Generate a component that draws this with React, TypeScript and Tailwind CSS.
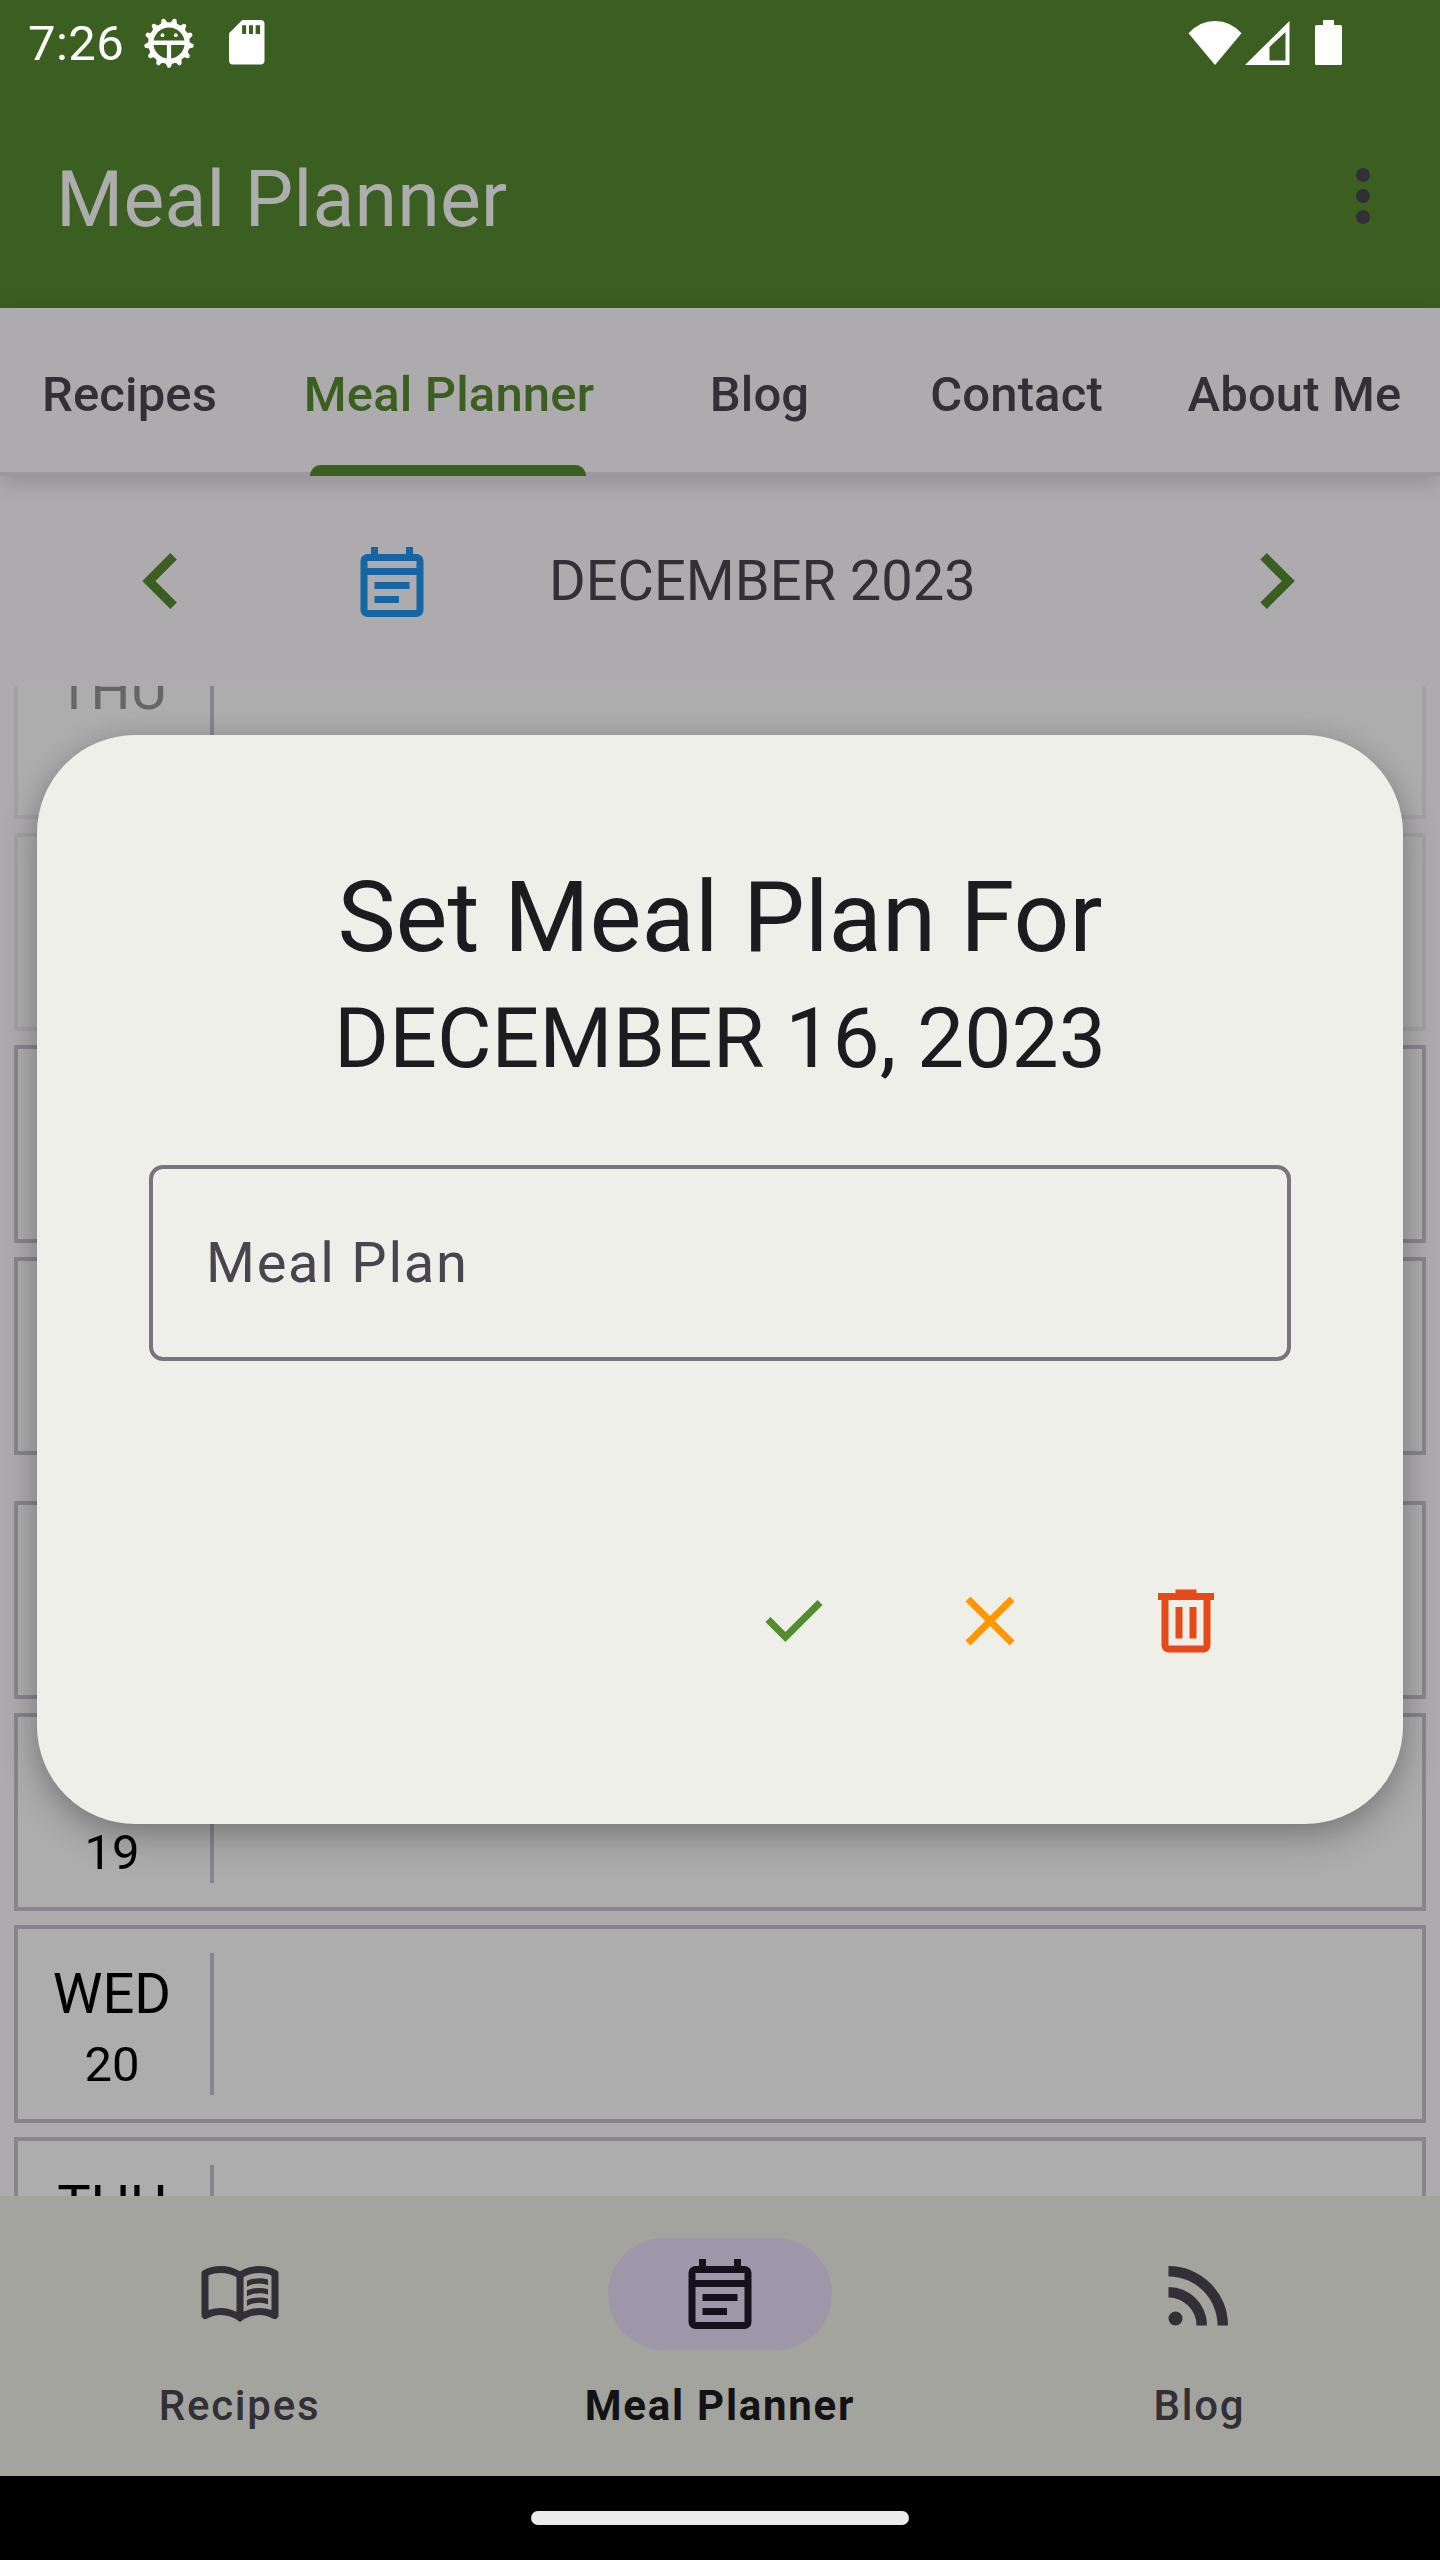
import React from "react";

type IconProps = { d: string; className: string };

function Symbol({ d, className }: IconProps) {
  return (
    <svg viewBox="0 -960 960 960" fill="currentColor" className={className}>
      <path d={d} />
    </svg>
  );
}

const ICONS = {
  left: "M560-240 320-480l240-240 56 56-184 184 184 184-56 56Z",
  right: "M504-480 320-664l56-56 240 240-240 240-56-56 184-184Z",
  event:
    "M280-240v-80h280v80H280Zm0-160v-80h400v80H280ZM200-80q-33 0-56.5-23.5T120-160v-560q0-33 23.5-56.5T200-800h40v-80h80v80h320v-80h80v80h40q33 0 56.5 23.5T840-720v560q0 33-23.5 56.5T760-80H200Zm0-80h560v-400H200v400Zm0-480h560v-80H200v80Z",
  check: "M382-240 154-468l57-57 171 171 367-367 57 57-424 424Z",
  close:
    "m256-200-56-56 224-224-224-224 56-56 224 224 224-224 56 56-224 224 224 224-56 56-224-224-224 224Z",
  trash:
    "M280-120q-33 0-56.5-23.5T200-200v-520h-40v-80h200v-40h240v40h200v80h-40v520q0 33-23.5 56.5T680-120H280Zm400-600H280v520h400v-520ZM360-280h80v-360h-80v360Zm160 0h80v-360h-80v360Z",
  book: "M560-564v-68q33-14 67.5-21t72.5-7q26 0 51 4t49 10v64q-24-9-48.5-13.5T700-600q-38 0-73 9.5T560-564Zm0 220v-68q33-14 67.5-21t72.5-7q26 0 51 4t49 10v64q-24-9-48.5-13.5T700-380q-38 0-73 9t-67 27Zm0-110v-68q33-14 67.5-21t72.5-7q26 0 51 4t49 10v64q-24-9-48.5-13.5T700-490q-38 0-73 9.5T560-454ZM260-320q47 0 91.5 10.5T440-278v-394q-41-24-87-36t-93-12q-36 0-71.5 7T120-692v396q35-12 69.5-18t70.5-6Zm260 42q44-21 88.5-31.5T700-320q36 0 70.5 6t69.5 18v-396q-33-14-68.5-21t-71.5-7q-47 0-93 12t-87 36v394Zm-40 118q-48-38-104-59t-116-21q-42 0-82.5 11T100-198q-21 11-40.5-1T40-234v-482q0-11 5.5-21T62-752q46-24 96-36t102-12q58 0 113.5 15T480-740q51-30 106.5-45T700-800q52 0 102 12t96 36q11 5 16.5 15t5.5 21v482q0 23-19.5 35t-40.5 1q-37-20-77.5-31T700-240q-60 0-116 21t-104 59Z",
  rss: "M200-120q-33 0-56.5-23.5T120-200q0-33 23.5-56.5T200-280q33 0 56.5 23.5T280-200q0 33-23.5 56.5T200-120Zm480 0q0-117-44-218.5T516-516q-76-76-177.5-120T120-680v-120q142 0 265 53t216 146q93 93 146 216t53 265H680Zm-240 0q0-67-25-124.5T346-346q-44-44-101.5-69T120-440v-120q92 0 171.5 34.5T431-431q60 60 94.5 139.5T560-120H440Z",
};

function BugIcon() {
  const teeth = Array.from({ length: 13 }, (_, i) => (i * 360) / 13);
  return (
    <svg viewBox="-26 -26 52 52" className="h-[52px] w-[52px]" fill="#fff">
      <circle r="18.2" fill="none" stroke="#fff" strokeWidth="5.2" />
      {teeth.map((a) => (
        <path key={a} transform={`rotate(${a})`} d="M-5.6 18.5Q-2.6 20-2.3 22.6A2.3 2.3 0 0 0 2.3 22.6Q2.6 20 5.6 18.5Z" />
      ))}
      <path d="M-17-2.5h34v4.4h-14.9v15h-4.2v-15H-17Z" />
      <circle cx="-6.5" cy="-7.8" r="1.9" />
      <circle cx="6.8" cy="-7.8" r="1.9" />
    </svg>
  );
}

function StatusBar() {
  return (
    <div className="flex h-[88px] items-center pl-[28px] pr-[98px] text-white">
      <span className="w-[115px] text-[49px] leading-[58px] tracking-[0.4px]">7:26</span>
      <div className="mb-[3px] flex flex-1 items-center">
        <BugIcon />
        <svg viewBox="0 0 36 45" className="ml-[34px] h-[45px] w-[36px]" fill="#fff">
          <path
            fillRule="evenodd"
            d="M13.3 0H31.5a4 4 0 0 1 4 4V40.5a4 4 0 0 1-4 4H4a4 4 0 0 1-4-4V13.3ZM13.1 5.3v8.7h4V5.3Zm6.9 0v8.7h4V5.3Zm6.6 0v8.7h4.5V5.3Z"
          />
        </svg>
        <svg viewBox="0 0 54 44" className="ml-auto h-[44px] w-[54px]" fill="#fff">
          <path d="M0.5 12.2Q11.5 0 27 0T53.5 12.2L27 44Z" />
        </svg>
        <svg viewBox="0 0 45 44" className="ml-[3px] h-[44px] w-[45px]" fill="#fff">
          <path fillRule="evenodd" d="M44.500 0V44H0ZM24.500 26V39.500H40.500V11Z" />
        </svg>
        <svg viewBox="0 0 27 45" className="ml-[25px] h-[45px] w-[27px]" fill="#fff">
          <path d="M8 0H19V5H25.500A1.500 1.500 0 0 1 27 6.500V43.500A1.500 1.500 0 0 1 25.500 45H1.500A1.500 1.500 0 0 1 0 43.500V6.500A1.500 1.500 0 0 1 1.500 5H8Z" />
        </svg>
      </div>
    </div>
  );
}

function Tabs() {
  const base = "relative flex h-full items-center justify-center pt-[10px]";
  return (
    <nav className="relative z-10 h-[168px] border-b-4 border-[#9d98a0] bg-[#adabad] shadow-[0_6px_22px_rgba(0,0,0,0.16)]">
      <div className="flex h-full text-[49px] leading-[58px] font-medium tracking-[0.15px] whitespace-nowrap text-[#322f36]">
        <div className={base + " w-[259px]"}>Recipes</div>
        <div className={base + " w-[380px] text-[#3a5f20]"}>
          Meal Planner
          <span className="absolute -bottom-1 left-[51px] h-[11px] w-[276px] rounded-t-[11px] bg-[#3a5f20]" />
        </div>
        <div className={base + " w-[241px]"}>Blog</div>
        <div className={base + " w-[273px]"}>Contact</div>
        <div className={base + " w-[283px]"}>About Me</div>
      </div>
    </nav>
  );
}

type Day = { day: string; date: number; past?: boolean; weekStart?: boolean };

const DAYS: Day[] = [
  { day: "THU", date: 14, past: true },
  { day: "FRI", date: 15, past: true },
  { day: "SAT", date: 16 },
  { day: "SUN", date: 17 },
  { day: "MON", date: 18, weekStart: true },
  { day: "TUE", date: 19 },
  { day: "WED", date: 20 },
  { day: "THU", date: 21 },
];

function DayRow({ day, date, past, weekStart }: Day) {
  return (
    <div
      className={
        "flex h-[198px] shrink-0 border-4 bg-[#adadad] " +
        (past ? "border-[#a2a2a2] text-[#666666] " : "border-[#89858d] text-black ") +
        (weekStart ? "mt-[32px]" : "")
      }
    >
      <div className="flex w-[192px] flex-col items-center pt-[25px] pr-[4px]">
        <span className="text-[56px] leading-[80px]">{day}</span>
        <span className="text-[49px] leading-[62px]">{date}</span>
      </div>
      <div className="mt-[24px] h-[142px] w-1 bg-[#89858d]" />
    </div>
  );
}

function NavItem({ icon, label, active }: { icon: string; label: string; active?: boolean }) {
  return (
    <div className="flex flex-1 flex-col items-center">
      <div
        className={
          "flex h-[112px] w-[224px] items-center justify-center rounded-full " +
          (active ? "bg-[#9e97a9] text-[#14111d]" : "text-[#322f36]")
        }
      >
        <Symbol d={icon} className="h-[84px] w-[84px]" />
      </div>
      <span
        className={
          "mt-[28px] text-[42px] leading-[56px] tracking-[1.75px] whitespace-nowrap " +
          (active ? "font-bold text-[#131215]" : "pr-[1px] font-medium text-[#322f36]")
        }
      >
        {label}
      </span>
    </div>
  );
}

function MealPlanDialog() {
  return (
    <div className="absolute top-[735px] left-[37px] z-20 flex h-[1089px] w-[1366px] flex-col rounded-[98px] bg-[#eeefe8] px-[112px] pt-[120px] shadow-[0_14px_36px_rgba(0,0,0,0.26),0_0_22px_rgba(0,0,0,0.08)]">
      <h1 className="text-center text-[98px] leading-[126px] whitespace-nowrap text-[#1c1b1f]">Set Meal Plan For</h1>
      <h2 className="mt-[2px] text-center text-[84px] leading-[112px] whitespace-nowrap text-[#1c1b1f]">
        DECEMBER 16, 2023
      </h2>
      <div className="mt-[70px] flex h-[196px] items-center rounded-[14px] border-4 border-[#79747e] pl-[53px] text-[56px] leading-[84px] tracking-[1.75px] text-[#49454f]">
        Meal Plan
      </div>
      <div className="mt-[218px] flex justify-end gap-[112px] pr-[63px]">
        <Symbol d={ICONS.check} className="h-[84px] w-[84px] text-[#558b2f]" />
        <Symbol d={ICONS.close} className="h-[84px] w-[84px] text-[#ff9800]" />
        <Symbol d={ICONS.trash} className="h-[84px] w-[84px] text-[#e64a19]" />
      </div>
    </div>
  );
}

export default function App() {
  return (
    <div className="relative flex h-[2560px] w-[1440px] flex-col overflow-hidden bg-[#adabad] font-['Roboto',sans-serif]">
      <header className="h-[308px] shrink-0 bg-[#3a5f20]">
        <StatusBar />
        <div className="flex h-[220px] items-center justify-between pt-[3px] pr-[70px] pl-[56px]">
          <span className="text-[77px] leading-[98px] tracking-[0.2px] text-[#adadad]">Meal Planner</span>
          <div className="mb-[7px] flex flex-col gap-[7px]">
            <span className="h-[14px] w-[14px] rounded-full bg-[#322f36]" />
            <span className="h-[14px] w-[14px] rounded-full bg-[#322f36]" />
            <span className="h-[14px] w-[14px] rounded-full bg-[#322f36]" />
          </div>
        </div>
      </header>
      <Tabs />
      <section className="flex h-[210px] shrink-0 items-center pr-[105px] pl-[105px]">
        <Symbol d={ICONS.left} className="h-[112px] w-[112px] text-[#3a5f20]" />
        <Symbol d={ICONS.event} className="mt-[2px] ml-[133px] h-[84px] w-[84px] text-[#1666a5]" />
        <span className="ml-[115px] text-[56px] leading-[84px] whitespace-nowrap text-[#322f36]">DECEMBER 2023</span>
        <Symbol d={ICONS.right} className="ml-auto h-[112px] w-[112px] text-[#3a5f20]" />
      </section>
      <main className="h-[1510px] shrink-0 overflow-hidden px-[14px]">
        <div className="-mt-[65px] flex flex-col gap-[14px]">
          {DAYS.map((d) => (
            <DayRow key={d.date} {...d} />
          ))}
        </div>
      </main>
      <footer className="flex h-[280px] shrink-0 bg-[#a3a49e] pt-[42px]">
        <NavItem icon={ICONS.book} label="Recipes" />
        <NavItem icon={ICONS.event} label="Meal Planner" active />
        <NavItem icon={ICONS.rss} label="Blog" />
      </footer>
      <div className="flex h-[84px] shrink-0 items-center justify-center bg-black">
        <span className="h-[14px] w-[378px] rounded-full bg-[#ebebeb]" />
      </div>
      <MealPlanDialog />
    </div>
  );
}
